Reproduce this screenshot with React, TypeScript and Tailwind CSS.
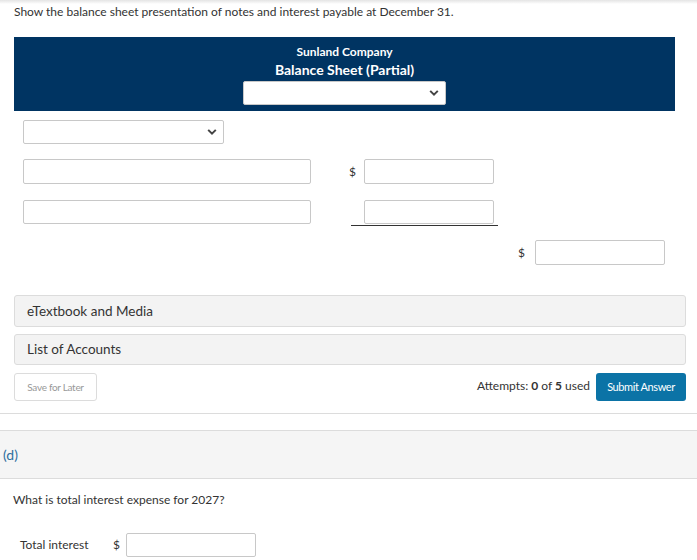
import React from "react";

function Chevron() {
  return (
    <svg width="10" height="7" viewBox="0 0 10 7" className="absolute right-[6px] top-1/2 -translate-y-1/2">
      <path d="M1.2 1.4 L5 5.2 L8.8 1.4" fill="none" stroke="#444" strokeWidth="2" />
    </svg>
  );
}

function Select({ className }: { className: string }) {
  return (
    <div className={`relative bg-white border border-[#c8c8c8] rounded-[2px] ${className}`}>
      <Chevron />
    </div>
  );
}

function Field({ className }: { className: string }) {
  return <div className={`bg-white border border-[#c8c8c8] rounded-[2px] ${className}`} />;
}

export default function App() {
  return (
    <div className="w-[697px] h-[560px] bg-white overflow-hidden text-[#333] font-['Lato','Liberation_Sans',sans-serif]">
      <div className="h-[4px] bg-gradient-to-b from-[#e4e4e4] to-white" />
      <p className="pl-[14px] text-[12px] leading-[16px]">
        Show the balance sheet presentation of notes and interest payable at December 31.
      </p>

      <div className="mx-[14px] w-[661px] mt-[17px] h-[74px] bg-[#003462] flex flex-col items-center pt-[7px]">
        <div className="text-white font-bold text-[12px] leading-[15px]">Sunland Company</div>
        <div className="text-white font-bold text-[14px] leading-[18px] mt-[2px]">Balance Sheet (Partial)</div>
        <Select className="w-[203px] h-[24px] mt-[2px]" />
      </div>

      <div className="pl-[23px] pt-[9px]">
        <Select className="w-[201px] h-[24px]" />

        <div className="flex items-center mt-[15px]">
          <Field className="w-[288px] h-[25px]" />
          <div className="w-[53px] text-right pr-[8px] text-[12px]">$</div>
          <Field className="w-[130px] h-[25px]" />
        </div>

        <div className="flex items-start mt-[16px]">
          <Field className="w-[288px] h-[24px]" />
          <div className="ml-[40px] pl-[13px] pr-[4px] pb-[1px] border-b border-[#333]">
            <Field className="w-[130px] h-[24px]" />
          </div>
        </div>

        <div className="flex items-center mt-[14px] ml-[495px]">
          <div className="w-[17px] text-left text-[12px]">$</div>
          <Field className="w-[130px] h-[25px]" />
        </div>
      </div>

      <div className="pl-[14px] pr-[11px] mt-[30px] flex flex-col gap-[7px]">
        <div className="h-[32px] bg-[#f3f3f3] border border-[#dcdcdc] rounded-[3px] flex items-center pl-[12px] text-[13.5px]">
          eTextbook and Media
        </div>
        <div className="h-[31px] bg-[#f3f3f3] border border-[#dcdcdc] rounded-[3px] flex items-center pl-[12px] text-[13.5px]">
          List of Accounts
        </div>
        <div className="flex items-center mt-[1px]">
          <div className="w-[83px] h-[28px] border border-[#dcdcdc] rounded-[3px] flex items-center justify-center text-[10px] text-[#999] tracking-[-0.3px]">
            Save for Later
          </div>
          <div className="ml-auto text-[12px] mr-[6px] -mt-[2px]">
            Attempts: <span className="font-bold">0</span> of <span className="font-bold">5</span> used
          </div>
          <div className="w-[90px] h-[28px] bg-[#0b73a6] rounded-[3px] flex items-center justify-center text-white text-[11px] tracking-[-0.4px]">
            Submit Answer
          </div>
        </div>
      </div>

      <div className="mt-[12px] border-t border-[#dcdcdc]" />
      <div className="mt-[16px] h-[49px] bg-[#f5f5f5] border-y border-[#dcdcdc] flex items-center pl-[3px] pt-[0px] text-[14px] text-[#2e6f9e]">
        (d)
      </div>

      <p className="pl-[13px] mt-[13px] text-[12px] leading-[16px]">What is total interest expense for 2027?</p>

      <div className="flex items-center pl-[20px] mt-[25px]">
        <div className="w-[93px] text-[12px]">Total interest</div>
        <div className="w-[13px] text-[12px]">$</div>
        <Field className="w-[130px] h-[24px]" />
      </div>
    </div>
  );
}
